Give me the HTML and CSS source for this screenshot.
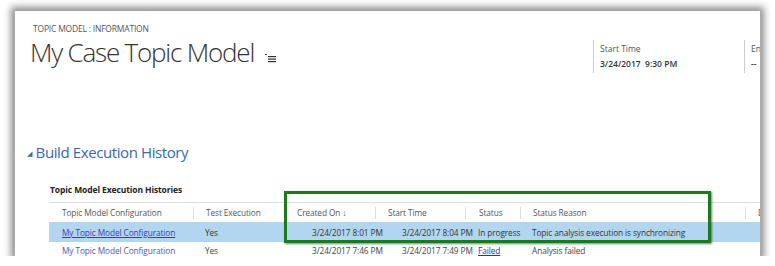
FILE: index.html
```html
<!DOCTYPE html>
<html lang="en">
<head>
  <meta charset="UTF-8">
  <meta name="viewport" content="width=device-width, initial-scale=1.0">
  <title>My Case Topic Model</title>
  <link rel="stylesheet" href="styles.css">
</head>
<body>
  <div class="panel">
    <div class="header">
      <div class="heading">
        <div class="entity">TOPIC MODEL : INFORMATION</div>
        <h1 class="title">My Case Topic Model
          <svg class="menu-icon" width="12" height="10" viewBox="0 0 12 10">
            <rect x="0" y="1" width="2" height="1" fill="#333"/>
            <rect x="3" y="3" width="8" height="1.2" fill="#333"/>
            <rect x="3" y="5.5" width="8" height="1.2" fill="#333"/>
            <rect x="3" y="8" width="8" height="1.2" fill="#333"/>
          </svg>
        </h1>
      </div>
      <div class="field">
        <div class="field-label">Start Time</div>
        <div class="field-value">3/24/2017&nbsp;&nbsp;9:30 PM</div>
      </div>
      <div class="field field-end">
        <div class="field-label">End Time</div>
        <div class="field-value">--</div>
      </div>
    </div>

    <h2 class="section"><span class="toggle">&#9698;</span>Build Execution History</h2>

    <div class="subgrid-title">Topic Model Execution Histories</div>
    <div class="grid">
      <div class="row head">
        <div class="cell">Topic Model Configuration</div>
        <div class="cell sep">Test Execution</div>
        <div class="cell sep">Created On <span class="arrow">&#8595;</span></div>
        <div class="cell sep">Start Time</div>
        <div class="cell sep">Status</div>
        <div class="cell sep">Status Reason</div>
        <div class="cell sep">Duration</div>
      </div>
      <div class="row selected">
        <div class="cell"><a class="link" href="#">My Topic Model Configuration</a></div>
        <div class="cell">Yes</div>
        <div class="cell date">3/24/2017 8:01 PM</div>
        <div class="cell date">3/24/2017 8:04 PM</div>
        <div class="cell">In progress</div>
        <div class="cell">Topic analysis execution is synchronizing</div>
        <div class="cell"></div>
      </div>
      <div class="row last">
        <div class="cell"><a class="link visited" href="#">My Topic Model Configuration</a></div>
        <div class="cell">Yes</div>
        <div class="cell date">3/24/2017 7:46 PM</div>
        <div class="cell date">3/24/2017 7:49 PM</div>
        <div class="cell"><a class="status-link" href="#">Failed</a></div>
        <div class="cell">Analysis failed</div>
        <div class="cell"></div>
      </div>
    </div>

    <div class="callout"></div>
  </div>
</body>
</html>
```

FILE: styles.css
```css
body {
  margin: 0;
  background: #fff;
  font-family: 'Open Sans', 'Noto Sans', sans-serif;
  color: #444;
}
.panel {
  position: relative;
  margin: 11px 0 0 15px;
  width: 745px;
  height: 245px;
  background: #fff;
  overflow: hidden;
  box-shadow: 0 0 0 1px #aaa, 0 0 7px 4px rgba(0, 0, 0, 0.45);
}
.header {
  display: flex;
  align-items: flex-start;
  height: 131px;
}
.heading {
  flex: none;
  width: 563px;
  padding: 12px 0 0 15px;
}
.entity {
  padding-left: 3px;
  font-size: 8.5px;
  color: #555;
  letter-spacing: -0.2px;
}
.title {
  margin: 0;
  font-size: 26px;
  font-weight: 300;
  color: #333;
  line-height: 36px;
  letter-spacing: -1.2px;
}
.menu-icon {
  margin-left: 5px;
  vertical-align: -1px;
}
.field {
  flex: none;
  margin-top: 29px;
  width: 144px;
  border-left: 1px solid #ccc;
  padding: 3px 0 4px 6px;
}
.field-end {
  width: 40px;
  white-space: nowrap;
}
.field-label {
  font-size: 8.5px;
  color: #555;
}
.field-value {
  font-size: 8.5px;
  font-weight: 600;
  color: #333;
  margin-top: 4px;
}
.section {
  margin: 0 0 0 12px;
  font-size: 15px;
  font-weight: 400;
  color: #3768b3;
  line-height: 20px;
  letter-spacing: -0.4px;
}
.toggle {
  font-size: 7px;
  vertical-align: 2px;
  margin-right: 4px;
}
.subgrid-title {
  margin: 20px 0 0 35px;
  font-size: 8.5px;
  font-weight: 700;
  color: #222;
  height: 18px;
  letter-spacing: -0.1px;
}
.grid {
  margin-left: 34px;
  border-top: 1px solid #ddd;
  font-size: 8.3px;
  letter-spacing: -0.1px;
}
.row {
  display: grid;
  grid-template-columns: 144px 92px 90px 90px 55px 225px 1fr;
  height: 20px;
  align-items: center;
  white-space: nowrap;
}
.row.head {
  height: 19px;
  color: #555;
}
.row.selected {
  background: #b3d6f0;
  color: #333;
}
.row.last {
  height: 14px;
  align-items: end;
}
.cell {
  padding-left: 12px;
}
.row .cell:first-child {
  padding-left: 13px;
}
.row.head .cell:nth-child(3) {
  padding-left: 11px;
}
.sep {
  border-left: 1px solid #ddd;
  line-height: 12px;
}
.date {
  padding-left: 27px;
}
.row .cell:nth-child(5) {
  padding-left: 13px;
}
.arrow {
  font-size: 9px;
}
.link {
  color: #3a3ea8;
  text-decoration: underline;
}
.link.visited {
  color: #5555b0;
  text-decoration: none;
}
.status-link {
  color: #2b2bd0;
  text-decoration: underline;
}
.callout {
  position: absolute;
  left: 269px;
  top: 180px;
  width: 421px;
  height: 46px;
  border: 3px solid #1c7a1c;
  box-shadow: 1px 1px 2px rgba(0, 0, 0, 0.5);
}
```
